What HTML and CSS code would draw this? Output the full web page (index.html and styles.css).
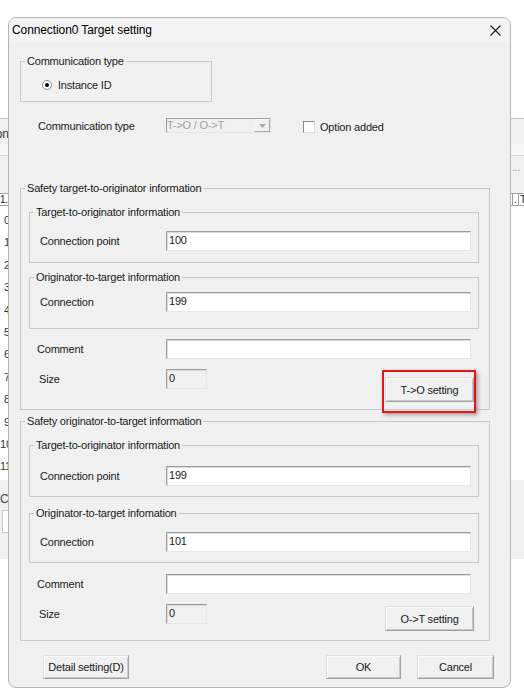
FILE: index.html
```html
<!DOCTYPE html>
<html>
<head>
<meta charset="utf-8">
<title>Connection0 Target setting</title>
<link rel="stylesheet" href="styles.css">
</head>
<body>
<div class="bgwin">
  <div class="bg-band-a"><span class="bg-cut">Connection</span></div>
  <div class="bg-band-b"></div>
  <div class="bg-band-c"><span class="bg-dots">...</span></div>
  <div class="bg-head">
    <span class="bg-h-left">1.</span>
    <span class="bg-h-gap"></span>
    <span class="bg-h-cell">.</span>
    <span class="bg-h-cell">T</span>
  </div>
  <div class="bg-rows">
    <div>0</div><div>1</div><div>2</div><div>3</div><div>4</div><div>5</div>
    <div>6</div><div>7</div><div>8</div><div>9</div><div>10</div><div>11</div>
  </div>
  <div class="bg-foot">
    <span class="bg-foot-text">Co</span>
    <div class="bg-foot-box"></div>
  </div>
</div>

<div class="dialog">
  <div class="titlebar">
    <span class="title">Connection0 Target setting</span>
    <svg class="close" width="11" height="11" viewBox="0 0 11 11"><path d="M0.5 0.5 L10.5 10.5 M10.5 0.5 L0.5 10.5" stroke="#1b1b1b" stroke-width="1.1" fill="none"/></svg>
  </div>
  <div class="dbody">
    <fieldset class="grp grp-comm">
      <legend>Communication type</legend>
      <div class="gbody">
        <div class="radio-row"><span class="radio"><span class="dot"></span></span><span>Instance ID</span></div>
      </div>
    </fieldset>

    <div class="combo-row">
      <span class="lbl-combo">Communication type</span>
      <div class="combo">
        <span class="combo-text">T-&gt;O / O-&gt;T</span>
        <span class="combo-btn"><svg width="7" height="4" viewBox="0 0 7 4"><path d="M0 0 H7 L3.5 4 Z" fill="#a8a8a8"/></svg></span>
      </div>
      <span class="check"></span>
      <span class="check-lbl">Option added</span>
    </div>

    <fieldset class="grp outer outer1">
      <legend>Safety target-to-originator information</legend>
      <div class="gbody">
        <fieldset class="grp inner in11">
          <legend>Target-to-originator information</legend>
          <div class="gbody"><div class="row"><span class="lbl">Connection point</span><div class="edit">100</div></div></div>
        </fieldset>
        <fieldset class="grp inner in12">
          <legend>Originator-to-target information</legend>
          <div class="gbody"><div class="row"><span class="lbl">Connection</span><div class="edit">199</div></div></div>
        </fieldset>
        <div class="row orow orow-comment1"><span class="olbl">Comment</span><div class="edit"></div></div>
        <div class="row orow orow-size orow-size1">
          <span class="olbl olbl-size">Size</span>
          <div class="edit edit-ro">0</div>
          <div class="btn-wrap btn-wrap1">
            <div class="btn btn-set">T-&gt;O setting</div>
            <div class="hl"></div>
          </div>
        </div>
      </div>
    </fieldset>

    <fieldset class="grp outer outer2">
      <legend>Safety originator-to-target information</legend>
      <div class="gbody">
        <fieldset class="grp inner in21">
          <legend>Target-to-originator information</legend>
          <div class="gbody"><div class="row"><span class="lbl">Connection point</span><div class="edit">199</div></div></div>
        </fieldset>
        <fieldset class="grp inner in22">
          <legend>Originator-to-target infomation</legend>
          <div class="gbody"><div class="row"><span class="lbl">Connection</span><div class="edit">101</div></div></div>
        </fieldset>
        <div class="row orow orow-comment2"><span class="olbl">Comment</span><div class="edit"></div></div>
        <div class="row orow orow-size orow-size2">
          <span class="olbl olbl-size">Size</span>
          <div class="edit edit-ro">0</div>
          <div class="btn-wrap btn-wrap2">
            <div class="btn btn-set">O-&gt;T setting</div>
          </div>
        </div>
      </div>
    </fieldset>

    <div class="footer">
      <div class="btn btn-detail">Detail setting(D)</div>
      <div class="btn btn-ok">OK</div>
      <div class="btn btn-cancel">Cancel</div>
    </div>
  </div>
</div>
</body>
</html>
```

FILE: styles.css
```css
* { box-sizing: border-box; }
html, body { margin: 0; padding: 0; }
body {
  width: 524px;
  height: 700px;
  position: relative;
  overflow: hidden;
  background: #ffffff;
  font-family: "Liberation Sans", Arial, sans-serif;
  font-size: 11px;
  letter-spacing: -0.2px;
  color: #1a1a1a;
}

/* ---------- background window (partly hidden) ---------- */
.bgwin {
  position: absolute;
  left: 0;
  top: 118px;
  width: 524px;
  height: 442px;
  background: #fff;
}
.bg-band-a {
  height: 26px;
  background: #f0f0f0;
  border-top: 1px solid #c8c8c8;
  position: relative;
}
.bg-cut {
  position: absolute;
  left: -50px;
  top: 8px;
  font-size: 12px;
  color: #333;
}
.bg-band-b { height: 11px; background: #f7f7f7; }
.bg-band-c {
  height: 38px;
  background: #f0f0f0;
  border-top: 1px solid #d9d9d9;
  text-align: right;
  padding: 6px 4px 0 0;
  color: #888;
  font-size: 10px;
}
.bg-head {
  height: 13px;
  display: flex;
  border-top: 1px solid #a0a0a0;
  border-bottom: 1px solid #a0a0a0;
  background: #fff;
  font-size: 10px;
  line-height: 11px;
}
.bg-h-left { width: 8px; }
.bg-h-gap { flex: 1; }
.bg-h-cell { width: 6px; border-left: 1px solid #a0a0a0; padding-left: 1px; }
.bg-rows {
  width: 10px;
  text-align: right;
  padding-top: 3px;
  line-height: 22.4px;
  font-size: 11px;
  color: #333;
}
.bg-foot {
  margin-top: 2px;
  height: 79px;
  background: #f0f0f0;
  padding-top: 12px;
}
.bg-foot-text { font-size: 12px; color: #444; display: block; height: 18px; }
.bg-foot-box {
  width: 60px;
  height: 23px;
  background: #fff;
  border: 1px solid #c8c8c8;
  margin-left: 2px;
}

/* ---------- dialog window ---------- */
.dialog {
  position: absolute;
  left: 8px;
  top: 17px;
  width: 503px;
  height: 671px;
  background: #f0f0f0;
  border: 1px solid #b4b4b4;
  border-radius: 8px;
  overflow: hidden;
}
.titlebar {
  height: 24px;
  background: #f3f3f3;
  display: flex;
  align-items: center;
  padding-left: 3px;
  padding-right: 9px;
}
.title {
  font-size: 12px;
  letter-spacing: -0.1px;
  flex: 1;
  color: #000;
}
.close { display: block; margin-top: 1px; }

.dbody {
  padding-left: 11px;
}

/* group boxes */
.grp {
  margin: 0;
  padding: 0;
  border: 1px solid #c6c6c6;
  min-width: 0;
}
.grp > legend {
  margin-left: 4px;
  padding: 0 2px;
  line-height: 14px;
  height: 14px;
}
.gbody { display: block; }

.grp-comm { width: 192px; margin-top: 12px; }
.grp-comm > .gbody { padding: 10px 0 9px 21px; }
.radio-row { display: flex; align-items: center; height: 14px; }
.radio {
  width: 10px;
  height: 10px;
  border-radius: 50%;
  border: 1px solid #8a8a8a;
  background: #fff;
  display: flex;
  align-items: center;
  justify-content: center;
  margin-right: 6px;
}
.dot { width: 4px; height: 4px; border-radius: 50%; background: #000; }

.combo-row {
  margin-top: 16px;
  height: 15px;
  display: flex;
  align-items: center;
  padding-left: 18px;
}
.lbl-combo { width: 128px; }
.combo {
  width: 105px;
  height: 15px;
  display: flex;
  background: #f0f0f0;
  border-top: 1px solid #a0a0a0;
  border-left: 1px solid #a0a0a0;
  border-right: 1px solid #e3e3e3;
  border-bottom: 1px solid #e3e3e3;
}
.combo-text {
  flex: 1;
  color: #a0a0a0;
  line-height: 13px;
}
.combo-btn {
  width: 16px;
  display: flex;
  align-items: center;
  justify-content: center;
  border-right: 1px solid #a8a8a8;
  border-bottom: 1px solid #a8a8a8;
  border-left: 1px solid #f8f8f8;
  border-top: 1px solid #f8f8f8;
}
.check {
  width: 12px;
  height: 12px;
  margin-left: 32px;
  align-self: flex-end;
  background: #fff;
  border-top: 1px solid #8c8c8c;
  border-left: 1px solid #8c8c8c;
  border-right: 1px solid #dcdcdc;
  border-bottom: 1px solid #dcdcdc;
}
.check-lbl { margin-left: 5px; margin-top: 3px; }

/* outer groups */
.outer { width: 470px; }
.outer > .gbody { padding: 10px 10px 7px 8px; }
.outer1 { margin-top: 48px; }
.outer2 { margin-top: 4px; }
.outer2 > .gbody { padding-bottom: 9px; }

.inner { width: 450px; }
.inner > .gbody { padding: 12px 7px 11px 10px; }
.in12 { margin-top: 7px; }
.in12 > .gbody { padding-top: 8px; padding-bottom: 16px; }
.in21 > .gbody { padding-top: 14px; padding-bottom: 10px; }
.in22 { margin-top: 9px; }
.in22 > .gbody { padding-top: 12px; padding-bottom: 10px; }

.row { display: flex; align-items: center; }
.lbl { width: 126px; }
.olbl { width: 137px; padding-left: 8px; }
.olbl-size { padding-left: 10px; height: 20px; line-height: 20px; }

.edit {
  width: 305px;
  height: 20px;
  background: #fff;
  border-top: 1px solid #9c9c9c;
  border-left: 1px solid #9c9c9c;
  border-right: 1px solid #e6e6e6;
  border-bottom: 1px solid #e6e6e6;
  box-shadow: inset 1px 1px 0 #dcdcdc;
  padding: 1px 0 0 2px;
  line-height: 14px;
}
.edit-ro {
  width: 41px;
  background: #f0f0f0;
}

.orow-comment1 { margin-top: 10px; }
.orow-comment2 { margin-top: 11px; }
.orow-size { align-items: flex-start; margin-top: 10px; }
.btn-wrap { position: relative; margin-left: auto; margin-right: 5px; }
.btn-wrap1 { margin-top: 8px; }
.btn-wrap2 { margin-top: 2px; }

.btn {
  height: 25px;
  display: flex;
  align-items: center;
  justify-content: center;
  background: #f0f0f0;
  border-top: 1px solid #dedede;
  border-left: 1px solid #dedede;
  border-right: 1px solid #a0a0a0;
  border-bottom: 1px solid #a0a0a0;
  box-shadow: inset 1px 1px 0 #fbfbfb, inset -1px -1px 0 #c9c9c9;
  color: #1a1a1a;
}
.btn-set { width: 89px; }

.hl {
  position: absolute;
  left: -3px;
  top: -7px;
  right: -2px;
  bottom: -11px;
  border: 2px solid #ee1111;
  box-shadow: 2px 2px 4px rgba(0, 0, 0, 0.35);
  pointer-events: none;
}

.footer {
  margin-top: 14px;
  display: flex;
  padding-right: 16px;
  padding-left: 23px;
}
.footer .btn { height: 24px; }
.btn-detail { width: 86px; }
.btn-ok { width: 75px; margin-left: auto; }
.btn-cancel { width: 77px; margin-left: 16px; }
```
